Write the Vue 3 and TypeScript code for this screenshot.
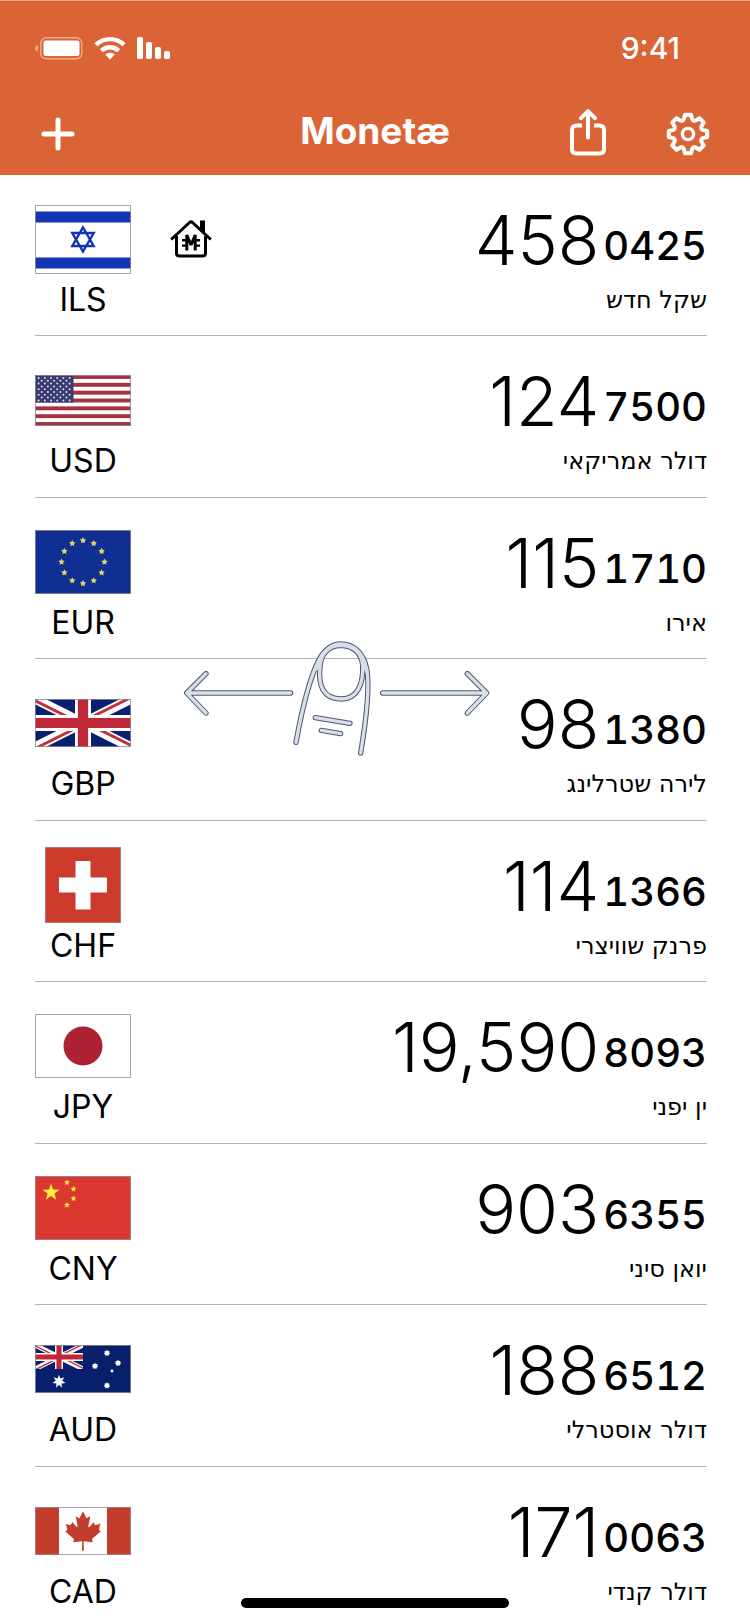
<script setup lang="ts">
interface Rate {
  code: string
  whole: string
  fraction: string
  name: string
  flagWidth: number
  flagHeight: number
  home?: boolean
}

const rates: Rate[] = [
  { code: 'ILS', whole: '458', fraction: '0425', name: 'שקל חדש', flagWidth: 96, flagHeight: 69, home: true },
  { code: 'USD', whole: '124', fraction: '7500', name: 'דולר אמריקאי', flagWidth: 96, flagHeight: 51 },
  { code: 'EUR', whole: '115', fraction: '1710', name: 'אירו', flagWidth: 96, flagHeight: 64 },
  { code: 'GBP', whole: '98', fraction: '1380', name: 'לירה שטרלינג', flagWidth: 96, flagHeight: 48 },
  { code: 'CHF', whole: '114', fraction: '1366', name: 'פרנק שוויצרי', flagWidth: 76, flagHeight: 76 },
  { code: 'JPY', whole: '19,590', fraction: '8093', name: 'ין יפני', flagWidth: 96, flagHeight: 64 },
  { code: 'CNY', whole: '903', fraction: '6355', name: 'יואן סיני', flagWidth: 96, flagHeight: 64 },
  { code: 'AUD', whole: '188', fraction: '6512', name: 'דולר אוסטרלי', flagWidth: 96, flagHeight: 48 },
  { code: 'CAD', whole: '171', fraction: '0063', name: 'דולר קנדי', flagWidth: 96, flagHeight: 48 },
]

function star(cx: number, cy: number, r: number, points = 5, inner = 0.4): string {
  const out: string[] = []
  for (let i = 0; i < points * 2; i++) {
    const radius = i % 2 ? r * inner : r
    const a = (Math.PI * i) / points - Math.PI / 2
    out.push(`${(cx + radius * Math.cos(a)).toFixed(2)},${(cy + radius * Math.sin(a)).toFixed(2)}`)
  }
  return out.join(' ')
}

const euStars = Array.from({ length: 12 }, (_, i) => {
  const a = (Math.PI * i) / 6
  return star(48 + 21.5 * Math.sin(a), 32 - 21.5 * Math.cos(a), 3.4, 5, 0.5)
})

const usDots: { x: number; y: number }[] = []
for (let row = 0; row < 9; row++) {
  for (let col = 0; col < (row % 2 ? 5 : 6); col++) {
    usDots.push({ x: 3.6 + col * 6.2 + (row % 2 ? 3.1 : 0), y: 3 + row * 2.8 })
  }
}

function gear(c: number, outer: number, root: number): string {
  const at = (r: number, deg: number) => {
    const a = (deg * Math.PI) / 180
    return `${(c + r * Math.sin(a)).toFixed(2)} ${(c - r * Math.cos(a)).toFixed(2)}`
  }
  let d = `M${at(outer, -9)}`
  for (let i = 0; i < 8; i++) {
    const t = i * 45
    d += `L${at(outer, t + 9)}L${at(root + 1, t + 14)}Q${at(root - 2, t + 22.5)} ${at(root + 1, t + 31)}L${at(outer, t + 36)}`
  }
  return d + 'Z'
}
const gearPath = gear(22, 19.5, 15)

const gesture = [
  'M362 218H52M108 160L50 218L108 278',
  'M638 218H948M892 160L950 218L892 278',
  'M378 366C394 278 414 182 448 116C466 86 488 71 512 71C550 71 580 96 590 145C602 208 585 320 572 398',
  'M512 75C476 77 454 98 450 138C444 194 458 236 514 236C566 236 580 186 578 135C574 96 548 77 512 75Z',
  'M436 292L540 309M454 330L512 340',
]
</script>

<template>
  <div class="app">
    <header class="header">
      <div class="status">
        <div class="status-icons">
          <svg width="48" height="24" viewBox="0 0 48 24" aria-hidden="true">
            <rect x="5.8" y="1.8" width="41" height="21" rx="5.5" fill="none" stroke="#f0ab87" stroke-width="1.4" />
            <rect x="8.5" y="4.5" width="36" height="15.5" rx="2.5" fill="#fff" />
            <path d="M2.8 9v6.400C1.200 14.800.3 13.600.3 12.200S1.200 9.600 2.800 9z" fill="#f5b78e" />
          </svg>
          <svg width="32" height="24" viewBox="0 0 32 24" aria-hidden="true">
            <g fill="none" stroke="#fff" stroke-width="4.400">
              <path d="M2 8.800C10 1.200 22 1.200 30 8.800" />
              <path d="M7.400 14.800C12.200 10.100 19.800 10.100 24.600 14.800" />
            </g>
            <path d="M16 23.500L11.200 18.600C14 16.200 18 16.200 20.800 18.600Z" fill="#fff" />
          </svg>
          <svg width="34" height="24" viewBox="0 0 34 24" fill="#fff" aria-hidden="true">
            <rect x="0" y="1" width="6" height="22" rx="1.800" />
            <rect x="9" y="6" width="6" height="17" rx="1.800" />
            <rect x="18" y="11" width="6" height="12" rx="1.800" />
            <rect x="27" y="15" width="6" height="8" rx="1.800" />
          </svg>
        </div>
        <time class="clock">9:41</time>
      </div>
      <nav class="nav">
        <button class="tool" type="button" aria-label="Add">
          <svg width="36" height="36" viewBox="0 0 36 36" fill="none" stroke="#fff" stroke-width="5" stroke-linecap="round">
            <path d="M18 4v28M4 18h28" />
          </svg>
        </button>
        <h1 class="title">Monetæ</h1>
        <div class="tools">
          <button class="tool" type="button" aria-label="Share">
            <svg class="share" width="36" height="48" viewBox="0 0 36 48" fill="none" stroke="#fff" stroke-width="4" stroke-linecap="round" stroke-linejoin="round">
              <path d="M12 16.500H6.500Q2 16.500 2 21V40Q2 44.500 6.500 44.500H29.500Q34 44.500 34 40V21Q34 16.500 29.500 16.500H24" stroke-linecap="butt" />
              <path d="M18 28.500V2.500M11 9.200L18 2.200L25 9.200" />
            </svg>
          </button>
          <button class="tool" type="button" aria-label="Settings">
            <svg width="44" height="44" viewBox="0 0 44 44" fill="none" stroke="#fff" stroke-width="4" stroke-linejoin="round">
              <path :d="gearPath" />
              <circle cx="22" cy="22" r="5.600" stroke-width="3.400" />
            </svg>
          </button>
        </div>
      </nav>
    </header>

    <main class="board">
      <ul class="rates">
        <li v-for="rate in rates" :key="rate.code" class="rate">
          <div class="currency">
            <div class="flag-box">
              <svg
                class="flag"
                :width="rate.flagWidth"
                :height="rate.flagHeight"
                :viewBox="`0 0 ${rate.flagWidth} ${rate.flagHeight}`"
                aria-hidden="true"
              >
                <g v-if="rate.code === 'ILS'">
                  <rect width="96" height="69" fill="#fff" />
                  <path d="M0 6.500H96V17.500H0zM0 52.500H96V63.500H0z" fill="#1334b3" />
                  <path d="M48 22.500L58.700 41H37.300zM48 46.500L58.700 28H37.300z" fill="none" stroke="#1334b3" stroke-width="2.400" />
                </g>
                <g v-else-if="rate.code === 'USD'">
                  <rect width="96" height="51" fill="#fff" />
                  <rect v-for="n in 7" :key="n" x="0" :y="(n - 1) * 7.846" width="96" height="3.923" fill="#a5333f" />
                  <rect width="38.500" height="27.500" fill="#3a3a70" />
                  <circle v-for="(dot, i) in usDots" :key="i" :cx="dot.x" :cy="dot.y" r="1" fill="#dcdce8" />
                </g>
                <g v-else-if="rate.code === 'EUR'">
                  <rect width="96" height="64" fill="#102f93" />
                  <polygon v-for="(p, i) in euStars" :key="i" :points="p" fill="#e3d566" />
                </g>
                <g v-else-if="rate.code === 'GBP'">
                  <defs>
                    <clipPath id="union-bounds"><path d="M0 0H60V30H0z" /></clipPath>
                    <clipPath id="union-quarters"><path d="M30 15H60V30zV30H0zH0V0zV0H60z" /></clipPath>
                    <g id="union" clip-path="url(#union-bounds)">
                      <rect width="60" height="30" fill="#08206f" />
                      <path d="M0 0L60 30M60 0L0 30" stroke="#fff" stroke-width="6" />
                      <path d="M0 0L60 30M60 0L0 30" clip-path="url(#union-quarters)" stroke="#c22f3c" stroke-width="3.600" />
                      <path d="M30 0V30M0 15H60" stroke="#fff" stroke-width="10" />
                      <path d="M30 0V30M0 15H60" stroke="#c0283a" stroke-width="6.400" />
                    </g>
                  </defs>
                  <use href="#union" transform="scale(1.6)" />
                </g>
                <g v-else-if="rate.code === 'CHF'">
                  <rect width="76" height="76" fill="#cb3a2a" />
                  <path d="M30.500 14H45.500V30.500H62V45.500H45.500V62.500H30.500V45.500H14V30.500H30.500z" fill="#fff" />
                </g>
                <g v-else-if="rate.code === 'JPY'">
                  <rect width="96" height="64" fill="#fff" />
                  <circle cx="48" cy="32" r="19.500" fill="#ad2133" />
                </g>
                <g v-else-if="rate.code === 'CNY'">
                  <rect width="96" height="64" fill="#dc3832" />
                  <g fill="#fdee3a">
                    <polygon :points="star(16, 16.500, 9)" />
                    <polygon :points="star(32, 6.500, 3, 5, 0.5)" />
                    <polygon :points="star(38.500, 13, 3, 5, 0.5)" />
                    <polygon :points="star(38.500, 22.500, 3, 5, 0.5)" />
                    <polygon :points="star(32, 29, 3, 5, 0.5)" />
                  </g>
                </g>
                <g v-else-if="rate.code === 'AUD'">
                  <rect width="96" height="48" fill="#08206b" />
                  <use href="#union" transform="scale(0.8)" />
                  <g fill="#fff">
                    <polygon :points="star(24, 36.500, 6.800, 7, 0.48)" />
                    <polygon :points="star(72, 8, 3.200, 7, 0.7)" />
                    <polygon :points="star(60, 21, 3.200, 7, 0.7)" />
                    <polygon :points="star(83, 18, 3.200, 7, 0.7)" />
                    <polygon :points="star(72, 40.500, 3.200, 7, 0.7)" />
                    <polygon :points="star(77, 26, 1.900, 5, 0.6)" />
                  </g>
                </g>
                <g v-else>
                  <rect width="96" height="48" fill="#fff" />
                  <path d="M0 0H24V48H0zM72 0H96V48H72z" fill="#c43c2b" />
                  <path
                    transform="translate(3.500 -9.100) scale(0.141)"
                    fill="#c43c2b"
                    d="m201 232-13.300 4.400 61.400 54c4.700 13.700-1.600 17.800-5.600 25l66.600-8.400-1.600 67 13.900-.3-3.100-66.600 66.700 8c-4.100-8.700-7.800-13.300-4-27.200l61.300-51-10.700-4c-8.800-6.800 3.800-32.600 5.600-48.900 0 0-35.700 12.300-38 5.800l-9.200-17.500-32.600 35.800c-3.500.9-5-.5-5.900-3.500l15-74.800-23.800 13.400q-3.200 1.300-5.200-2.200l-23-46-23.600 47.800q-2.800 2.500-5 .7L264 130.800l13.700 74.100c-1.100 3-3.700 3.800-6.700 2.200l-31.200-35.300c-4 6.500-6.800 17.100-12.200 19.500s-23.500-4.500-35.600-7c4.200 14.800 17 39.600 9 47.700"
                  />
                </g>
                <rect x="0.500" y="0.500" :width="rate.flagWidth - 1" :height="rate.flagHeight - 1" fill="none" stroke="#8f8f98" stroke-opacity="0.800" />
              </svg>
            </div>
            <span class="code">{{ rate.code }}</span>
          </div>
          <div class="marker">
            <svg v-if="rate.home" width="42" height="38" viewBox="0 0 42 38" role="img" aria-label="Home currency">
              <g fill="none" stroke="#000" stroke-width="3" stroke-linejoin="round">
                <path d="M1.200 19.500L19.500 2.500Q21 1.300 22.500 2.500L40.800 19.500" />
                <path d="M6.500 16V33Q6.500 36 9.500 36H32.500Q35.500 36 35.500 33V16" />
              </g>
              <path d="M30 .5H35V13L30 8.500z" />
              <g fill="none" stroke="#000">
                <path d="M16.800 30.500V15L21 25L25.200 15V30.500" stroke-width="3" stroke-linejoin="bevel" />
                <path d="M12 20.200H17M12 25.600H17M25 20.200H30M25 25.600H30" stroke-width="2.400" />
              </g>
            </svg>
          </div>
          <div class="value">
            <div class="amount">
              <span class="whole">{{ rate.whole }}</span>
              <span class="fraction">{{ rate.fraction }}</span>
            </div>
            <span class="name" lang="he" dir="rtl">{{ rate.name }}</span>
          </div>
        </li>
      </ul>

      <svg class="gesture" width="314" height="124" viewBox="30 50 942 372" aria-hidden="true">
        <g fill="none" stroke-linecap="round" stroke-linejoin="round">
          <path v-for="(d, i) in gesture" :key="'o' + i" :d="d" stroke="#4f586b" stroke-width="16" />
          <path d="M440 150C445 110 478 71 512 71C555 71 585 100 592 165L578 135C574 96 548 77 512 75C476 77 454 98 450 138Z" fill="#d9deeb" stroke="#d9deeb" stroke-width="4" />
          <path v-for="(d, i) in gesture" :key="'f' + i" :d="d" stroke="#d9deeb" stroke-width="10" />
        </g>
      </svg>
    </main>

    <div class="home-bar"></div>
  </div>
</template>

<style>
body {
  margin: 0;
  background: #fff;
}
</style>

<style scoped>
.app {
  position: relative;
  display: flex;
  flex-direction: column;
  height: 100vh;
  overflow: hidden;
  background: #fff;
  color: #000;
  font-family: Inter, "Liberation Sans", sans-serif;
}

.header {
  flex: none;
  background: #db6437;
  color: #fff;
}

.status {
  display: flex;
  align-items: center;
  justify-content: space-between;
  height: 92px;
  padding: 0 70px 0 35px;
  box-sizing: border-box;
  border-top: 1px solid #eaa684;
}

.status-icons {
  display: flex;
  align-items: center;
  gap: 11px;
  padding-top: 2px;
}

.status svg,
.tool svg,
.flag,
.marker svg {
  display: block;
}

.clock {
  padding-top: 2px;
  font-size: 30px;
  font-weight: 500;
}

.nav {
  display: grid;
  grid-template-columns: 1fr auto 1fr;
  align-items: center;
  height: 83px;
  padding: 0 40px;
}

.tool {
  justify-self: start;
  padding: 0;
  border: 0;
  background: none;
  cursor: pointer;
}

.tools {
  display: flex;
  align-items: center;
  justify-content: flex-end;
  gap: 60px;
}

.share {
  margin-bottom: 2px;
}

.title {
  margin: 0;
  padding-bottom: 6px;
  font-size: 37px;
  line-height: 44px;
  font-weight: 700;
}

.board {
  position: relative;
  flex: 1;
  min-height: 0;
  overflow-y: auto;
  scrollbar-width: none;
}

.rates {
  display: grid;
  grid-auto-rows: 161px 162px;
  margin: 0 43px 0 35px;
  padding: 0;
  list-style: none;
}

.rate {
  display: flex;
  box-sizing: border-box;
  padding-top: 26px;
  border-bottom: 1px solid #b4b4b6;
}

.currency {
  display: flex;
  flex-direction: column;
  align-items: center;
  width: 96px;
}

.flag-box {
  display: flex;
  align-items: center;
  height: 76px;
}

.code {
  margin-top: 3px;
  font-size: 32px;
  line-height: 40px;
}

.marker {
  display: flex;
  align-items: center;
  height: 76px;
  margin-left: 39px;
}

.value {
  display: flex;
  flex: 1;
  flex-direction: column;
  align-items: flex-end;
}

.amount {
  display: flex;
  align-items: center;
  gap: 4px;
  height: 76px;
}

.whole {
  padding-top: 2px;
  font-size: 68px;
  line-height: 76px;
  font-weight: 300;
}

.fraction {
  padding-top: 13px;
  font-size: 40px;
  line-height: 48px;
  font-weight: 500;
  font-variant-numeric: tabular-nums;
}

.name {
  margin-top: 3px;
  font-family: "DejaVu Sans", "Noto Sans", sans-serif;
  font-size: 24px;
  line-height: 40px;
}

.gesture {
  position: absolute;
  top: 462px;
  left: 180px;
  pointer-events: none;
}

.home-bar {
  position: absolute;
  bottom: 16px;
  left: 50%;
  width: 268px;
  height: 10px;
  border-radius: 5px;
  background: #000;
  transform: translateX(-50%);
}
</style>
